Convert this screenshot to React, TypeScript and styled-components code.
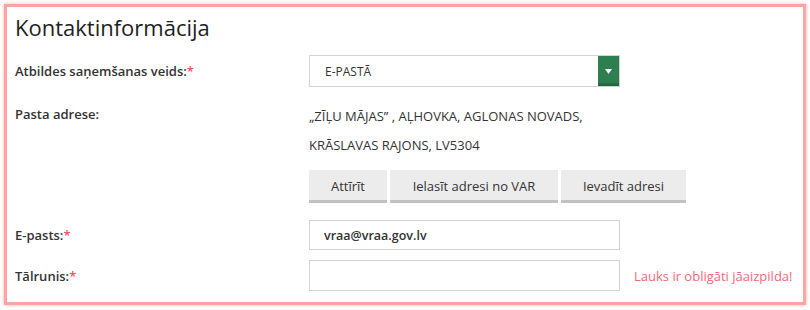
import React from "react";
import styled, { createGlobalStyle } from "styled-components";

const GlobalStyle = createGlobalStyle`
  body {
    margin: 0;
    background: #ffffff;
    font-family: "Open Sans", "DejaVu Sans", sans-serif;
  }
`;

const Page = styled.div`
  padding: 4px;
`;

const Frame = styled.div`
  box-sizing: border-box;
  width: 802px;
  height: 301px;
  border: 3px solid #ffa3a3;
  box-shadow: 0 0 3px rgba(255, 150, 150, 0.8);
  padding: 5px 8px 0 8px;
  background: #ffffff;
`;

const Title = styled.h2`
  margin: 0;
  font-size: 22px;
  line-height: 30px;
  font-weight: 400;
  color: #1e1e1e;
`;

const Row = styled.div<{ $top: number; $align?: string }>`
  display: grid;
  grid-template-columns: 294px 1fr;
  align-items: ${(p) => p.$align || "center"};
  margin-top: ${(p) => p.$top}px;
`;

const Label = styled.div<{ $lh?: number }>`
  font-size: 13px;
  font-weight: 600;
  color: #333333;
  line-height: ${(p) => p.$lh || 20}px;
`;

const Star = styled.span`
  color: #ff4d6a;
`;

const Field = styled.div`
  display: flex;
  align-items: center;
`;

const SelectBox = styled.div`
  box-sizing: border-box;
  width: 311px;
  height: 32px;
  border: 1px solid #d2d2d2;
  display: flex;
  align-items: stretch;
`;

const SelectText = styled.div`
  flex: 1;
  padding-left: 15px;
  display: flex;
  align-items: center;
  font-size: 12px;
  color: #333333;
`;

const Caret = styled.div`
  width: 21px;
  background: linear-gradient(#2d7f4f 85%, #1f5e39);
  display: flex;
  align-items: center;
  justify-content: center;
  svg {
    display: block;
  }
`;

const Address = styled.div`
  font-size: 13px;
  color: #333333;
  line-height: 29px;
`;

const Buttons = styled.div`
  display: flex;
  gap: 3px;
`;

const Button = styled.button<{ $w: number }>`
  box-sizing: border-box;
  width: ${(p) => p.$w}px;
  height: 33px;
  border: none;
  border-bottom: 3px solid #c2c2c2;
  background: #ececec;
  font-family: "Open Sans", "DejaVu Sans", sans-serif;
  font-size: 13px;
  color: #333333;
  padding: 0;
  padding-top: 2px;
`;

const Input = styled.div<{ $h: number }>`
  box-sizing: border-box;
  width: 311px;
  height: ${(p) => p.$h}px;
  border: 1px solid #d2d2d2;
  padding-left: 14px;
  display: flex;
  align-items: center;
  font-size: 12.5px;
  font-weight: 600;
  color: #333333;
`;

const ErrorText = styled.span`
  margin-left: 14px;
  font-size: 13px;
  color: #f7687a;
`;

export default function App() {
  return (
    <Page>
      <GlobalStyle />
      <Frame>
        <Title>Kontaktinformācija</Title>
        <Row $top={13}>
          <Label>
            Atbildes saņemšanas veids:<Star>*</Star>
          </Label>
          <Field>
            <SelectBox>
              <SelectText>E-PASTĀ</SelectText>
              <Caret>
                <svg width="7" height="5" viewBox="0 0 7 5">
                  <polygon points="0,0 7,0 3.5,5" fill="#ffffff" />
                </svg>
              </Caret>
            </SelectBox>
          </Field>
        </Row>
        <Row $top={15} $align="start">
          <Label $lh={24}>Pasta adrese:</Label>
          <Address>
            „ZĪĻU MĀJAS” , AĻHOVKA, AGLONAS NOVADS,
            <br />
            KRĀSLAVAS RAJONS, LV5304
          </Address>
        </Row>
        <Row $top={10}>
          <div />
          <Buttons>
            <Button $w={78}>Attīrīt</Button>
            <Button $w={168}>Ielasīt adresi no VAR</Button>
            <Button $w={125}>Ievadīt adresi</Button>
          </Buttons>
        </Row>
        <Row $top={17}>
          <Label>
            E-pasts:<Star>*</Star>
          </Label>
          <Field>
            <Input $h={30}>vraa@vraa.gov.lv</Input>
          </Field>
        </Row>
        <Row $top={10}>
          <Label>
            Tālrunis:<Star>*</Star>
          </Label>
          <Field>
            <Input $h={31} />
            <ErrorText>Lauks ir obligāti jāaizpilda!</ErrorText>
          </Field>
        </Row>
      </Frame>
    </Page>
  );
}
